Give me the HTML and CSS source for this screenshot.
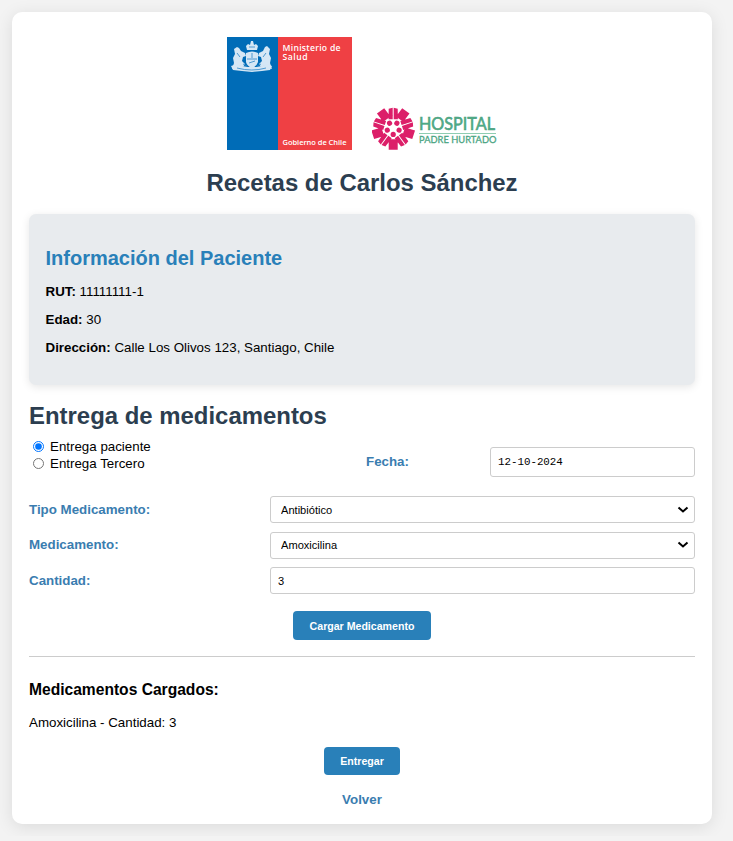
FILE: index.html
```html
<!DOCTYPE html>
<html lang="es">
<head>
<meta charset="utf-8">
<title>Recetas de Carlos Sánchez</title>
<link rel="stylesheet" href="styles.css">
</head>
<body>
<main class="card">
  <header class="logos">
    <svg class="logo-minsal" viewBox="0 0 125 113" role="img" aria-label="Ministerio de Salud">
      <rect width="51" height="113" fill="#006cb7"/>
      <rect x="51" width="74" height="113" fill="#ef4044"/>
      <g fill="#d5e7f5">
        <path d="M19 16q6-3 12 0v9q-1 4-6 6-5-2-6-6z"/>
        <path d="M20 13l-1-4 2-2 2 1 1-4h2l1 4 2-1 2 2-1 4z"/>
        <path d="M7 12l3-2 2 1 2 3 4 2 1 3-3 1-1 4 3 3-2 3-5-2-2 3-4 1 2-6-1-5 2-4z"/>
        <path d="M43 12l-3-3-2 1-2 4-4 2-1 3 3 1 1 4-3 3 2 3 5-2 2 3 4 1-2-6 1-5-2-4z"/>
        <path d="M4 29l6-2 5 2 6 1h8l6-1 5-2 5 2-2 4-8 1-10 1-10-1-9-1z"/>
      </g>
      <g fill="none" stroke="#2b85c6" stroke-width=".8">
        <path d="M20 22h10M25 16v5M10 16l3 4M39 16l-3 4M10 31q15 4 29 0M22 10h6M16 27l4 2M34 27l-4 2M22 26l6-2"/>
      </g>
      <g class="minsal-text">
        <text x="55.500" y="13.500" textLength="58">Ministerio de</text>
        <text x="55.500" y="22.500" textLength="25">Salud</text>
        <text class="minsal-gov" x="55.500" y="108" textLength="64">Gobierno de Chile</text>
      </g>
    </svg>
    <svg class="logo-hospital" viewBox="0 0 127 46" role="img" aria-label="Hospital Padre Hurtado">
      <defs>
        <g id="figure">
          <circle cy="6.200" r="2.600"/>
          <path d="M-4.500 21.500V14.500L-7 11-5 9.500-3 11H3L5 9.500 7 11 4.500 14.500V21.500z"/>
          <path transform="rotate(36)" d="M-4.700 9H-.5V20.500L-4.500 19.500zM.5 9H4.700L4.500 19.500 .5 20.500z"/>
        </g>
      </defs>
      <g transform="translate(21.200 24.200)" fill="#dc1f69">
        <use href="#figure"/>
        <use href="#figure" transform="rotate(72)"/>
        <use href="#figure" transform="rotate(144)"/>
        <use href="#figure" transform="rotate(216)"/>
        <use href="#figure" transform="rotate(288)"/>
      </g>
      <text class="hosp-big" x="47" y="25.500" textLength="76" lengthAdjust="spacingAndGlyphs">HOSPITAL</text>
      <path d="M47 29.500h77" stroke="#8fcdb2"/>
      <text class="hosp-small" x="47" y="39" textLength="77.500" lengthAdjust="spacingAndGlyphs">PADRE HURTADO</text>
    </svg>
  </header>

  <h1>Recetas de Carlos Sánchez</h1>

  <section class="patient">
    <h2>Información del Paciente</h2>
    <p><strong>RUT:</strong> 11111111-1</p>
    <p><strong>Edad:</strong> 30</p>
    <p><strong>Dirección:</strong> Calle Los Olivos 123, Santiago, Chile</p>
  </section>

  <h1 class="delivery-title">Entrega de medicamentos</h1>
  <form>
    <div class="delivery">
      <div class="radios">
        <label><input type="radio" name="entrega" checked>Entrega paciente</label>
        <label><input type="radio" name="entrega">Entrega Tercero</label>
      </div>
      <label class="name fecha" for="fecha">Fecha:</label>
      <input class="field date" id="fecha" type="text" value="12-10-2024">
    </div>
    <div class="rows">
      <label class="name" for="tipo">Tipo Medicamento:</label>
      <div class="select">
        <select class="field" id="tipo"><option>Antibiótico</option></select>
        <svg viewBox="0 0 12 8"><path d="M1.500 1.500L6 5.500 10.500 1.500"/></svg>
      </div>
      <label class="name" for="medicamento">Medicamento:</label>
      <div class="select">
        <select class="field" id="medicamento"><option>Amoxicilina</option></select>
        <svg viewBox="0 0 12 8"><path d="M1.500 1.500L6 5.500 10.500 1.500"/></svg>
      </div>
      <label class="name" for="cantidad">Cantidad:</label>
      <input class="field" id="cantidad" type="text" value="3">
    </div>
    <button class="btn load" type="button">Cargar Medicamento</button>
  </form>

  <hr>
  <h3>Medicamentos Cargados:</h3>
  <p class="loaded">Amoxicilina - Cantidad: 3</p>
  <button class="btn deliver" type="button">Entregar</button>
  <a class="back" href="#">Volver</a>
</main>
</body>
</html>
```

FILE: styles.css
```css
* {
  box-sizing: border-box;
}

body {
  margin: 0;
  padding: 12px;
  background: #f3f3f3;
  color: #000;
  font: 13.33px/16px "Liberation Sans", Arial, sans-serif;
}

.card {
  width: 700px;
  height: 812px;
  padding: 25px 17px 0;
  border-radius: 10px;
  background: #fff;
  box-shadow: 0 3px 17px rgba(0, 0, 0, .1);
}

.logos {
  display: flex;
  justify-content: center;
  align-items: flex-end;
  gap: 20px;
  height: 113px;
}

.logo-minsal {
  width: 125px;
  height: 113px;
}

.logo-hospital {
  width: 127px;
  height: 46px;
  margin-right: -2px;
}

.minsal-text {
  fill: #fff;
  font: 600 8.6px/9px "Open Sans", sans-serif;
}

.minsal-gov {
  font-size: 7.5px;
}

.hosp-big {
  fill: #4fb08a;
  font: 18px Lato, sans-serif;
  stroke: #4a9c7c;
  stroke-width: .6px;
}

.hosp-small {
  fill: #4ba583;
  font: 10px Lato, sans-serif;
  stroke: #4ba583;
  stroke-width: .3px;
}

h1 {
  margin: 19px 0 17px;
  color: #2c3e50;
  font-size: 23.93px;
  line-height: 28px;
  text-align: center;
}

.patient {
  height: 171px;
  padding: 32px 16.5px 0;
  border-radius: 7px;
  background: #e8ebee;
  box-shadow: 0 2px 8px rgba(0, 0, 0, .1);
}

h2 {
  margin: 0 0 14px;
  color: #2980b9;
  font-size: 20px;
  line-height: 24px;
}

.patient p {
  margin: 0 0 12px;
}

.delivery-title {
  margin: 17px 0 8px;
  text-align: left;
}

.delivery {
  display: grid;
  grid-template-columns: 337px 124px 205px;
  align-items: end;
  height: 39px;
  margin-bottom: 19px;
}

.radios {
  align-self: start;
}

.radios label {
  display: flex;
  align-items: center;
  height: 17px;
}

.radios input {
  width: 11px;
  height: 11px;
  margin: 0 6px 0 4px;
}

.name {
  color: #3a7db0;
  font-weight: bold;
}

.fecha {
  margin-bottom: 7px;
}

.field {
  width: 100%;
  height: 27px;
  margin: 0;
  padding: 0 7px;
  border: 1px solid #ccc;
  border-radius: 3px;
  background: #fff;
  color: #000;
  font: 11.1px "Liberation Sans", Arial, sans-serif;
}

.date {
  height: 30px;
  font: 10.8px "Liberation Mono", monospace;
}

.rows {
  display: grid;
  grid-template-columns: 241px 425px;
  row-gap: 8.5px;
  align-items: center;
}

.select {
  display: grid;
  align-items: center;
}

.select > * {
  grid-area: 1 / 1;
}

select.field {
  appearance: none;
  padding-left: 10px;
}

.select svg {
  justify-self: end;
  width: 12px;
  height: 8px;
  margin-right: 6px;
  pointer-events: none;
  fill: none;
  stroke: #000;
  stroke-width: 2;
}

.btn {
  display: block;
  margin: 0 auto;
  padding: 0;
  border: 0;
  border-radius: 4px;
  background: #2980b9;
  color: #fff;
  font: bold 10.6px "Liberation Sans", Arial, sans-serif;
}

.load {
  width: 138px;
  height: 29px;
  margin-top: 17px;
}

.deliver {
  width: 76px;
  height: 28px;
}

hr {
  height: 1px;
  margin: 16px 0 24px;
  border: 0;
  background: #ccc;
}

h3 {
  margin: 0 0 16px;
  font-size: 15.6px;
  line-height: 18px;
}

.loaded {
  margin: 0 0 16px;
}

.back {
  display: block;
  margin-top: 17px;
  color: #3a7db0;
  font-weight: bold;
  text-align: center;
  text-decoration: none;
}
```
